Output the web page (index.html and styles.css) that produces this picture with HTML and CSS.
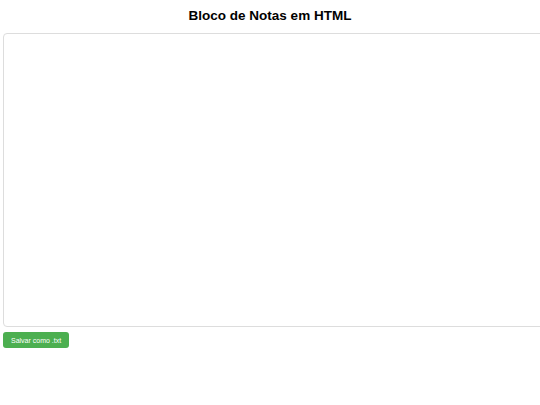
FILE: index.html
```html
<!DOCTYPE html>
<html>
<head>
    <title>Bloco de Notas</title>
    <link rel="stylesheet" href="styles.css">
</head>
<body>
    <h1>Bloco de Notas em HTML</h1>
    <textarea class="notepad"></textarea>
    <button class="save-button">Salvar como .txt</button>
</body>
</html>
```

FILE: styles.css
```css
body {
    font-family: 'Liberation Sans', Arial, sans-serif;
    margin: 0;
    padding: 0 3px;
    background: #fff;
    overflow: hidden;
}

h1 {
    text-align: center;
    font-size: 13.5px;
    line-height: 16px;
    margin: 8px 0 9px;
    color: #000;
}

.notepad {
    display: block;
    width: 100%;
    height: 282px;
    padding: 5px;
    border: 1px solid #ddd;
    border-radius: 4px;
    font-family: 'Liberation Sans', Arial, sans-serif;
    font-size: 8px;
    resize: vertical;
}

.save-button {
    margin-top: 5px;
    height: 16px;
    padding: 0 8px;
    background: #4caf50;
    color: white;
    border: none;
    border-radius: 3px;
    font-family: 'Liberation Sans', Arial, sans-serif;
    font-size: 7px;
    cursor: pointer;
}
```
